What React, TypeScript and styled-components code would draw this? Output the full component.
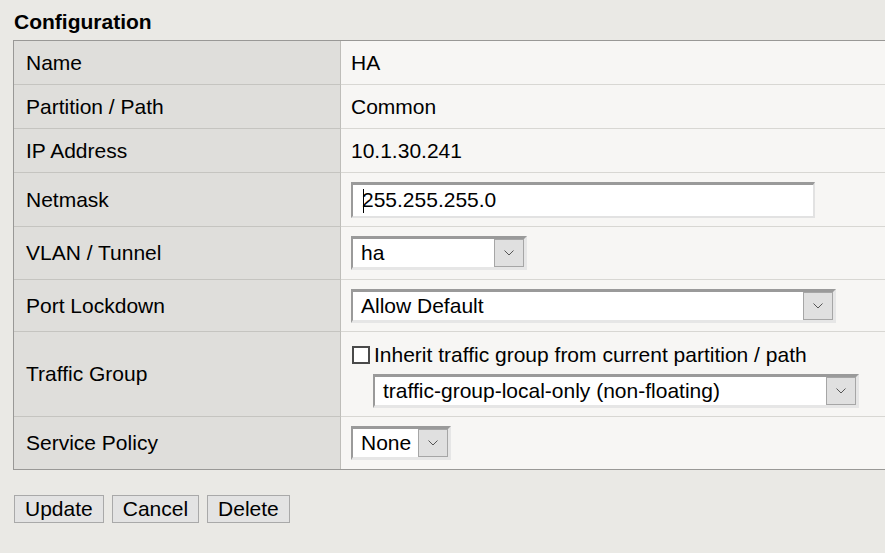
import React from "react";
import styled, { createGlobalStyle } from "styled-components";

const GlobalStyle = createGlobalStyle`
  html, body {
    margin: 0;
    padding: 0;
    background: #eae9e5;
    overflow: hidden;
  }
  body {
    font-family: "Liberation Sans", Arial, sans-serif;
    color: #000;
  }
`;

const Page = styled.div`
  width: 920px;
  height: 553px;
  padding: 10px 0 0 13px;
  box-sizing: border-box;
`;

const Title = styled.h2`
  margin: 0 0 7px 1px;
  font-size: 21px;
  line-height: 23px;
  font-weight: bold;
`;

const Table = styled.div`
  display: flex;
  flex-direction: column;
  border: 1px solid #999896;
  border-right: none;
`;

const Row = styled.div<{ $h: number }>`
  display: grid;
  grid-template-columns: 327px 1fr;
  height: ${(p) => p.$h}px;
  box-sizing: border-box;
`;

const Label = styled.div<{ $last?: boolean }>`
  display: flex;
  align-items: center;
  padding-left: 12px;
  background: #dfdedb;
  border-right: 1px solid #bebdb9;
  border-bottom: ${(p) => (p.$last ? "none" : "1px solid #c5c4c0")};
  font-size: 21px;
`;

const Value = styled.div<{ $last?: boolean; $column?: boolean }>`
  display: flex;
  flex-direction: ${(p) => (p.$column ? "column" : "row")};
  align-items: ${(p) => (p.$column ? "flex-start" : "center")};
  justify-content: ${(p) => (p.$column ? "center" : "flex-start")};
  padding-left: 10px;
  padding-top: ${(p) => (p.$column ? "3px" : "0")};
  background: #f7f6f4;
  border-bottom: ${(p) => (p.$last ? "none" : "1px solid #d8d7d3")};
  font-size: 21px;
`;

const TextBox = styled.div`
  position: relative;
  width: 464px;
  height: 36px;
  box-sizing: border-box;
  background: #fff;
  border-style: solid;
  border-width: 3px 2px 2px 2px;
  border-color: #9a9a9a #e2e2e2 #e2e2e2 #9a9a9a;
  display: flex;
  align-items: center;
  padding-left: 9px;
  font-size: 21px;
  &::before {
    content: "";
    position: absolute;
    left: 10px;
    top: 4px;
    width: 1px;
    height: 24px;
    background: #000;
  }
`;

const SelectBox = styled.div<{ $w: number; $indent?: number }>`
  width: ${(p) => p.$w}px;
  height: 34px;
  margin-left: ${(p) => p.$indent || 0}px;
  box-sizing: border-box;
  display: flex;
  border-style: solid;
  border-width: 3px 3px 3px 2px;
  border-color: #9a9a9a #e6e6e6 #e6e6e6 #9a9a9a;
  background: #fff;
`;

const SelectText = styled.div`
  flex: 1;
  display: flex;
  align-items: center;
  padding-left: 8px;
  font-size: 21px;
  white-space: nowrap;
  overflow: hidden;
`;

const SelectButton = styled.div`
  width: 30px;
  flex: none;
  box-sizing: border-box;
  background: #e0e0e0;
  border: 1px solid #a6a6a6;
  display: flex;
  align-items: center;
  justify-content: center;
`;

const CheckRow = styled.label`
  display: flex;
  align-items: center;
  gap: 4px;
  margin: 0 0 7px 1px;
  font-size: 21px;
  line-height: 24px;
`;

const CheckBox = styled.span`
  width: 18px;
  height: 18px;
  box-sizing: border-box;
  border: 2px solid #4a4a4a;
  background: #fff;
`;

const Buttons = styled.div`
  display: flex;
  gap: 8px;
  margin: 25px 0 0 1px;
`;

const Button = styled.button`
  height: 28px;
  padding: 0 10px;
  background: #e3e3e3;
  border: 1px solid #a9a9a9;
  font-family: "Liberation Sans", Arial, sans-serif;
  font-size: 21px;
  line-height: 24px;
  color: #000;
`;

const Chevron = () => (
  <svg width="10" height="6" viewBox="0 0 10 6">
    <path d="M0.5 0.5 L5 5 L9.5 0.5" fill="none" stroke="#555" strokeWidth="1" />
  </svg>
);

function Select({ text, width, indent }: { text: string; width: number; indent?: number }) {
  return (
    <SelectBox $w={width} $indent={indent}>
      <SelectText>{text}</SelectText>
      <SelectButton>
        <Chevron />
      </SelectButton>
    </SelectBox>
  );
}

export default function App() {
  return (
    <>
      <GlobalStyle />
      <Page>
        <Title>Configuration</Title>
        <Table>
          <Row $h={44}>
            <Label>Name</Label>
            <Value>HA</Value>
          </Row>
          <Row $h={44}>
            <Label>Partition / Path</Label>
            <Value>Common</Value>
          </Row>
          <Row $h={44}>
            <Label>IP Address</Label>
            <Value>10.1.30.241</Value>
          </Row>
          <Row $h={54}>
            <Label>Netmask</Label>
            <Value>
              <TextBox>255.255.255.0</TextBox>
            </Value>
          </Row>
          <Row $h={53}>
            <Label>VLAN / Tunnel</Label>
            <Value>
              <Select text="ha" width={176} />
            </Value>
          </Row>
          <Row $h={52}>
            <Label>Port Lockdown</Label>
            <Value>
              <Select text="Allow Default" width={485} />
            </Value>
          </Row>
          <Row $h={85}>
            <Label>Traffic Group</Label>
            <Value $column>
              <CheckRow>
                <CheckBox />
                Inherit traffic group from current partition / path
              </CheckRow>
              <Select text="traffic-group-local-only (non-floating)" width={486} indent={22} />
            </Value>
          </Row>
          <Row $h={52}>
            <Label $last>Service Policy</Label>
            <Value $last>
              <Select text="None" width={100} />
            </Value>
          </Row>
        </Table>
        <Buttons>
          <Button>Update</Button>
          <Button>Cancel</Button>
          <Button>Delete</Button>
        </Buttons>
      </Page>
    </>
  );
}
